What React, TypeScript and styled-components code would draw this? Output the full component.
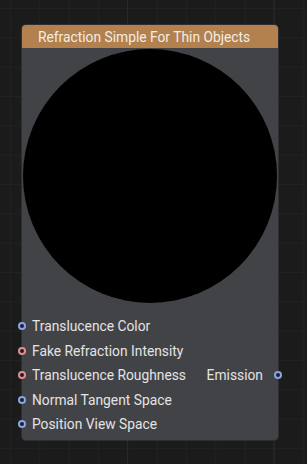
import React from "react";
import styled, { createGlobalStyle } from "styled-components";

const GlobalStyle = createGlobalStyle`
  html, body {
    margin: 0;
    padding: 0;
    width: 100%;
    height: 100%;
    background: #1b1b1b;
  }
  #root {
    height: 100%;
  }
`;

const StyledCanvas = styled.div`
  width: 307px;
  height: 464px;
  overflow: hidden;
  box-sizing: border-box;
  padding: 25px 0 0 22px;
  font-family: Roboto, "Liberation Sans", sans-serif;
  background-color: #1b1b1b;
  background-image:
    linear-gradient(to right, #292929 1px, transparent 1px),
    linear-gradient(to right, #212121 1px, transparent 1px),
    linear-gradient(to bottom, #212121 1px, transparent 1px);
  background-size: 146.6px 100%, 29.33px 29.33px, 29.33px 29.33px;
  background-position: 127px 0, 10px 8px, 10px 8px;
`;

const StyledNode = styled.div`
  position: relative;
  width: 256px;
  border-radius: 4px;
  background: #424347;
  box-shadow: 0 0 0 1px #2e2f32;
`;

const StyledHeader = styled.div`
  height: 23px;
  display: flex;
  align-items: center;
  padding-left: 16px;
  border-radius: 4px 4px 0 0;
  background: #b3814e;
  color: #f2ede6;
  font-size: 13.8px;
  white-space: nowrap;
`;

const StyledPreview = styled.div`
  height: 256px;
  display: flex;
  align-items: center;
  justify-content: center;
`;

const StyledSphere = styled.div`
  width: 254px;
  height: 254px;
  border-radius: 50%;
  background: #000;
`;

const StyledPorts = styled.div`
  display: flex;
  justify-content: space-between;
  padding: 10px 0 3px;
`;

const StyledColumn = styled.div`
  display: flex;
  flex-direction: column;
  justify-content: center;
`;

const StyledRow = styled.div<{ $side: "in" | "out" }>`
  position: relative;
  height: 24.5px;
  display: flex;
  align-items: center;
  padding: ${({ $side }) => ($side === "in" ? "0 0 0 10px" : "0 15px 0 0")};
  color: #e4e4e4;
  font-size: 13.8px;
  white-space: nowrap;
`;

const StyledDot = styled.span<{ $color: string; $side: "in" | "out" }>`
  position: absolute;
  top: 50%;
  ${({ $side }) => ($side === "in" ? "left: -4px;" : "right: -4px;")}
  width: 4px;
  height: 4px;
  margin-top: -4px;
  border-radius: 50%;
  border: 2px solid ${({ $color }) => $color};
  background: #1e2026;
`;

const BLUE = "#8aa4e6";
const RED = "#e38e8e";

const inputs = [
  { label: "Translucence Color", color: BLUE },
  { label: "Fake Refraction Intensity", color: RED },
  { label: "Translucence Roughness", color: RED },
  { label: "Normal Tangent Space", color: BLUE },
  { label: "Position View Space", color: BLUE },
];

const outputs = [{ label: "Emission", color: BLUE }];

function App() {
  return (
    <>
      <GlobalStyle />
      <StyledCanvas>
        <StyledNode>
          <StyledHeader>Refraction Simple For Thin Objects</StyledHeader>
          <StyledPreview>
            <StyledSphere />
          </StyledPreview>
          <StyledPorts>
            <StyledColumn>
              {inputs.map((p) => (
                <StyledRow key={p.label} $side="in">
                  <StyledDot $color={p.color} $side="in" />
                  {p.label}
                </StyledRow>
              ))}
            </StyledColumn>
            <StyledColumn>
              {outputs.map((p) => (
                <StyledRow key={p.label} $side="out">
                  {p.label}
                  <StyledDot $color={p.color} $side="out" />
                </StyledRow>
              ))}
            </StyledColumn>
          </StyledPorts>
        </StyledNode>
      </StyledCanvas>
    </>
  );
}

export default App;
